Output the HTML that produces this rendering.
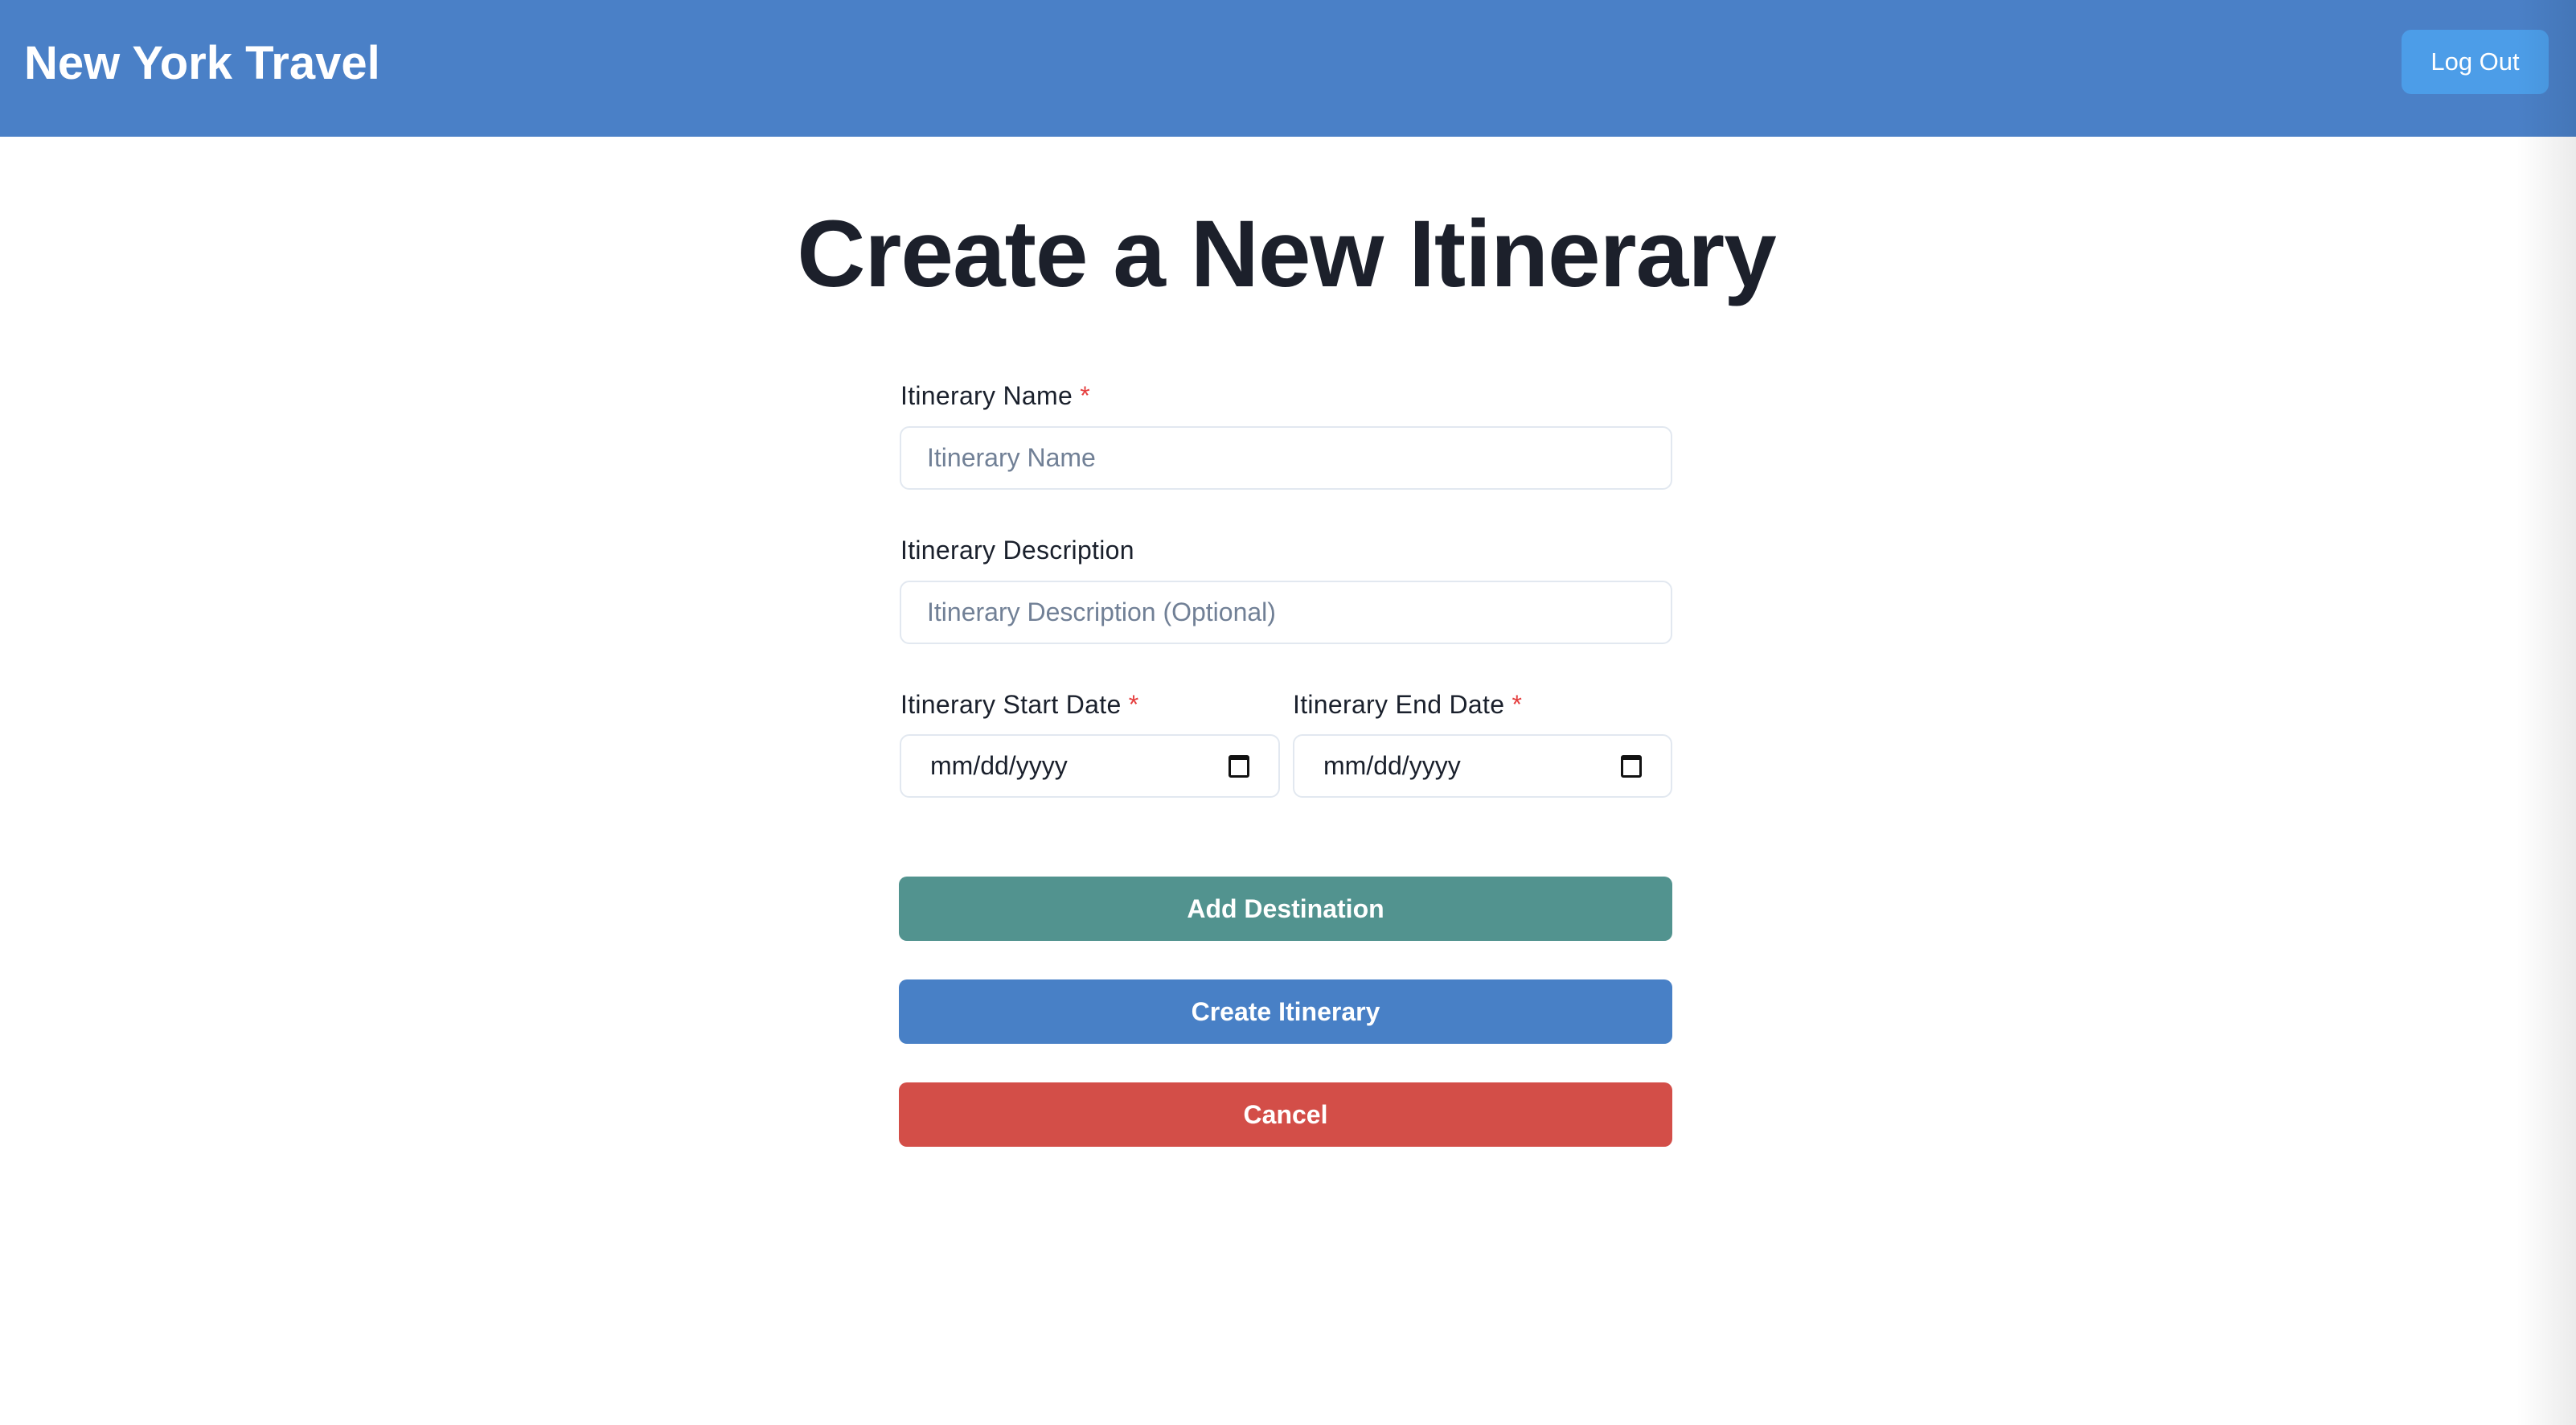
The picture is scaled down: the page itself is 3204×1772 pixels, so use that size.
<!DOCTYPE html>
<html><head><meta charset="utf-8"><style>
*{margin:0;padding:0;box-sizing:border-box}
html,body{width:3204px;height:1772px;overflow:hidden;background:#fff;font-family:"Liberation Sans",sans-serif;color:#1a202c}
.hdr{position:absolute;left:0;top:0;width:3204px;height:170px;background:#4a80c7}
.brand{position:absolute;left:30px;top:44px;font-size:58px;font-weight:bold;color:#fff;line-height:70px;white-space:nowrap}
.logout{position:absolute;left:2987px;top:37px;width:183px;height:80px;background:#4c9de8;border-radius:12px;color:#fff;font-size:31px;line-height:80px;text-align:center}
h1{position:absolute;left:0;width:3200px;top:246px;text-align:center;font-size:118px;font-weight:bold;letter-spacing:-1px;line-height:140px;color:#1c202b}
.lbl{position:absolute;font-size:32px;letter-spacing:0.3px;line-height:40px;color:#1a202c;white-space:nowrap}
.lbl span{color:#e53e3e}
.inp{position:absolute;height:79px;border:2px solid #e2e8f0;border-radius:12px;font-size:32px;line-height:75px;padding-left:32px;color:#718096;white-space:nowrap}
.inp.d{color:#1a202c;padding-left:36px}
.cal{position:absolute;right:36px;top:24px;width:26px;height:28px;border:3px solid #111;border-top-width:6px;border-radius:3px}
.btn{position:absolute;left:1118px;width:962px;height:80px;border-radius:10px;color:#fff;font-size:32px;font-weight:bold;text-align:center;line-height:80px}
.shade{position:absolute;left:3130px;top:0;width:74px;height:1772px;background:linear-gradient(to right,rgba(0,0,0,0),rgba(0,0,0,0.08))}
</style></head><body>
<div class="hdr"><div class="brand">New York Travel</div><div class="logout">Log Out</div></div>
<h1>Create a New Itinerary</h1>
<div class="lbl" style="left:1120px;top:472px">Itinerary Name <span>*</span></div>
<div class="inp" style="left:1119px;top:530px;width:961px">Itinerary Name</div>
<div class="lbl" style="left:1120px;top:664px">Itinerary Description</div>
<div class="inp" style="left:1119px;top:722px;width:961px">Itinerary Description (Optional)</div>
<div class="lbl" style="left:1120px;top:856px">Itinerary Start Date <span>*</span></div>
<div class="lbl" style="left:1608px;top:856px">Itinerary End Date <span>*</span></div>
<div class="inp d" style="left:1119px;top:913px;width:473px">mm/dd/yyyy<div class="cal"></div></div>
<div class="inp d" style="left:1608px;top:913px;width:472px">mm/dd/yyyy<div class="cal"></div></div>
<div class="btn" style="top:1090px;background:#52938f">Add Destination</div>
<div class="btn" style="top:1218px;background:#4880c6">Create Itinerary</div>
<div class="btn" style="top:1346px;background:#d34e48">Cancel</div>
<div class="shade"></div>
</body></html>
